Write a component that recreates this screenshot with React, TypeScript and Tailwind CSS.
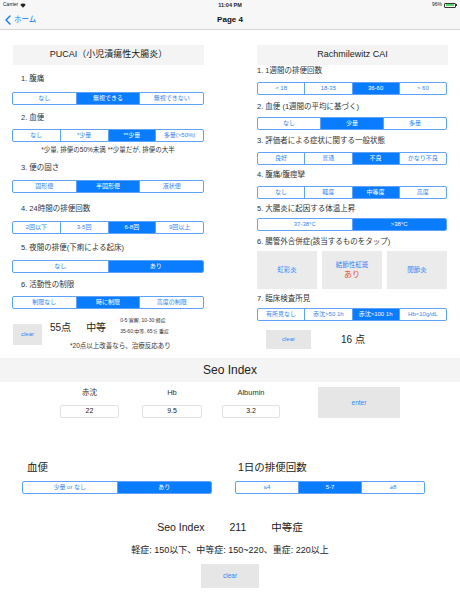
import React from "react";

const BLUE = "text-[#2f86f6]";

// iOS style segmented control
function Seg({ items, selected, className = "" }: { items: string[]; selected: number; className?: string }) {
	return (
		<div className={`flex h-[13px] border border-[#5ea3f7] rounded-[2px] overflow-hidden ${className}`}>
			{items.map((t, i) => (
				<div
					key={i}
					className={`flex-1 flex items-center justify-center text-[6px] whitespace-nowrap ${i > 0 ? "border-l border-[#5ea3f7]" : ""} ${
						i === selected ? "bg-[#0a7cff] text-white" : BLUE
					}`}
				>
					{t}
				</div>
			))}
		</div>
	);
}

function Label({ children, className = "" }: { children: React.ReactNode; className?: string }) {
	return <div className={`h-[12px] leading-[12px] text-[7.5px] text-[#333] whitespace-nowrap ${className}`}>{children}</div>;
}

function StatusBar() {
	return (
		<div className="relative h-[10px] flex items-center justify-between px-[3px] text-[5px] text-[#222]">
			<div className="flex items-center gap-[2px]">
				<span>Carrier</span>
				<svg width="6" height="5" viewBox="0 0 12 9">
					<path d="M6 9 L0.5 3 A8 8 0 0 1 11.5 3 Z" fill="#222" />
				</svg>
			</div>
			<div className="absolute left-0 right-0 text-center font-semibold text-[5.5px]">11:04 PM</div>
			<div className="flex items-center gap-[2px]">
				<span>96%</span>
				<div className="flex items-center">
					<div className="w-[12px] h-[5px] border border-[#333] rounded-[1px] p-[0.5px]">
						<div className="h-full w-[90%] bg-[#4cd964]" />
					</div>
					<div className="w-[1px] h-[2px] bg-[#333]" />
				</div>
			</div>
		</div>
	);
}

function NavBar() {
	return (
		<div className="relative h-[20px] flex items-center border-b border-[#d4d4d4]">
			<div className="flex items-center pl-[5px] gap-[3px] text-[#0a7cff]">
				<svg width="6" height="10" viewBox="0 0 6 10">
					<path d="M5 1 L1 5 L5 9" stroke="#0a7cff" strokeWidth="1.4" fill="none" strokeLinecap="round" strokeLinejoin="round" />
				</svg>
				<span className="text-[7.5px]">ホーム</span>
			</div>
			<div className="absolute left-0 right-0 text-center font-bold text-[8px] text-[#111]">Page 4</div>
		</div>
	);
}

function PucaiPanel() {
	return (
		<div className="w-[230px] pl-[12px] flex flex-col">
			<div className="mt-[15px] ml-[1px] w-[191px] h-[20px] bg-[#f4f4f4] flex items-center justify-center text-[9px] text-[#222]">
				PUCAI（小児潰瘍性大腸炎）
			</div>
			<Label className="mt-[8px] ml-[9px]">1. 腹痛</Label>
			<Seg className="mt-[7px] w-[192px]" items={["なし", "無視できる", "無視できない"]} selected={1} />
			<Label className="mt-[7px] ml-[9px]">2. 血便</Label>
			<Seg className="mt-[5px] w-[192px]" items={["なし", "*少量", "**少量", "多量(>50%)"]} selected={2} />
			<div className="mt-[3px] w-[192px] h-[10px] leading-[10px] text-center text-[6.5px] text-[#333]">
				*少量, 排便の50%未満 **少量だが, 排便の大半
			</div>
			<Label className="mt-[7px] ml-[9px]">3. 便の固さ</Label>
			<Seg className="mt-[6px] w-[192px]" items={["固形便", "半固形便", "液状便"]} selected={1} />
			<Label className="mt-[10px] ml-[9px]">4. 24時間の排便回数</Label>
			<Seg className="mt-[6px] w-[192px]" items={["2回以下", "3-5回", "6-8回", "9回以上"]} selected={2} />
			<Label className="mt-[8px] ml-[9px]">5. 夜間の排便(下痢による起床)</Label>
			<Seg className="mt-[6px] w-[192px]" items={["なし", "あり"]} selected={1} />
			<Label className="mt-[6px] ml-[9px]">6. 活動性の制限</Label>
			<Seg className="mt-[5px] w-[192px]" items={["制限なし", "時に制限", "高度の制限"]} selected={1} />
			<div className="mt-[10px] flex items-start">
				<div className={`mt-[5px] ml-[1px] w-[29px] h-[21px] bg-[#e6e6e6] flex items-center justify-center text-[6px] ${BLUE}`}>clear</div>
				<div className="ml-[8px] flex flex-col">
					<div className="flex items-start h-[18px]">
						<span className="leading-[18px] text-[10px] text-[#222]">55点</span>
						<span className="ml-[15px] leading-[18px] text-[10px] text-[#222]">中等</span>
						<div className="ml-[14px] -mt-[4px] leading-[11px] text-[5px] text-[#333]">
							<div>0-5:寛解, 10-30:軽症</div>
							<div>35-60:中等, 65≦ 重症</div>
						</div>
					</div>
					<div className="mt-[4px] ml-[20px] h-[10px] leading-[10px] text-[6.5px] text-[#333] whitespace-nowrap">
						*20点以上改善なら、治療反応あり
					</div>
				</div>
			</div>
		</div>
	);
}

function GrayBox({ children }: { children: React.ReactNode }) {
	return <div className="w-[60px] h-[38px] bg-[#ebebeb] flex flex-col items-center justify-center">{children}</div>;
}

function CaiPanel() {
	return (
		<div className="w-[230px] pl-[27px] flex flex-col">
			<div className="mt-[15px] w-[191px] h-[20px] bg-[#f4f4f4] flex items-center justify-center text-[9px] text-[#222]">
				Rachmilewitz CAI
			</div>
			<Label>1. 1週間の排便回数</Label>
			<Seg className="mt-[5px] w-[190px]" items={["< 18", "18-35", "36-60", "> 60"]} selected={2} />
			<Label className="mt-[6px]">2. 血便 (1週間の平均に基づく)</Label>
			<Seg className="mt-[4px] w-[190px]" items={["なし", "少量", "多量"]} selected={1} />
			<Label className="mt-[5px]">3. 評価者による症状に関する一般状態</Label>
			<Seg className="mt-[5px] w-[190px]" items={["良好", "普通", "不良", "かなり不良"]} selected={2} />
			<Label className="mt-[4px]">4. 腹痛/腹痙攣</Label>
			<Seg className="mt-[5px] w-[190px]" items={["なし", "軽度", "中等度", "高度"]} selected={2} />
			<Label className="mt-[4px]">5. 大腸炎に起因する体温上昇</Label>
			<Seg className="mt-[3px] w-[190px]" items={["37-38°C", ">38°C"]} selected={1} />
			<Label className="mt-[5px]">6. 腸管外合併症(該当するものをタップ)</Label>
			<div className="mt-[3px] w-[190px] flex justify-between">
				<GrayBox>
					<span className={`text-[6.5px] ${BLUE}`}>虹彩炎</span>
				</GrayBox>
				<GrayBox>
					<span className={`text-[6.5px] ${BLUE}`}>結節性紅斑</span>
					<span className="mt-[1px] text-[8px] leading-[10px] text-[#e5483c]">あり</span>
				</GrayBox>
				<GrayBox>
					<span className={`text-[6.5px] ${BLUE}`}>関節炎</span>
				</GrayBox>
			</div>
			<Label className="mt-[4px]">7. 臨床検査所見</Label>
			<Seg className="mt-[3px] w-[190px]" items={["有所見なし", "赤沈>50 1h", "赤沈>100 1h", "Hb<10g/dL"]} selected={2} />
			<div className="mt-[9px] flex items-center">
				<div className={`ml-[9px] w-[45px] h-[19px] bg-[#e6e6e6] flex items-center justify-center text-[6px] ${BLUE}`}>clear</div>
				<span className="ml-[30px] text-[10px] text-[#222]">16 点</span>
			</div>
		</div>
	);
}

function InputCol({ label, value, width, className = "" }: { label: string; value: string; width: string; className?: string }) {
	return (
		<div className={`flex flex-col items-center ${width} ${className}`}>
			<div className="h-[12px] leading-[12px] text-[7.5px] text-[#333]">{label}</div>
			<div className="mt-[6px] w-full h-[13px] border border-[#e2e2e2] rounded-[2px] flex items-center justify-center text-[7px] text-[#222]">
				{value}
			</div>
		</div>
	);
}

function SeoSection() {
	return (
		<div className="flex flex-col">
			<div className="h-[24px] bg-[#f4f4f4] flex items-center justify-center text-[12px] text-[#222]">Seo Index</div>
			<div className="mt-[5px] pl-[60px] flex items-start">
				<InputCol label="赤沈" value="22" width="w-[59px]" />
				<InputCol label="Hb" value="9.5" width="w-[60px]" className="ml-[23px]" />
				<InputCol label="Albumin" value="3.2" width="w-[58px]" className="ml-[20px]" />
				<div className={`ml-[38px] w-[82px] h-[31px] bg-[#e6e6e6] flex items-center justify-center text-[6.5px] ${BLUE}`}>enter</div>
			</div>
			<div className="mt-[43px] pl-[22px] flex">
				<div className="w-[190px] flex flex-col">
					<div className="ml-[5px] h-[12px] leading-[12px] text-[10.5px] text-[#222]">血便</div>
					<Seg className="mt-[8px] h-[12px]" items={["少量 or なし", "あり"]} selected={1} />
				</div>
				<div className="ml-[23px] w-[190px] flex flex-col">
					<div className="ml-[3px] h-[12px] leading-[12px] text-[10.5px] text-[#222]">1日の排便回数</div>
					<Seg className="mt-[8px] h-[12px]" items={["≤4", "5-7", "≥8"]} selected={1} />
				</div>
			</div>
			<div className="mt-[27px] h-[14px] flex items-center justify-center gap-[25px] text-[10.5px] text-[#222]">
				<span>Seo Index</span>
				<span>211</span>
				<span>中等症</span>
			</div>
			<div className="mt-[9px] h-[12px] leading-[12px] text-center text-[9px] text-[#222]">
				軽症: 150以下、中等症: 150~220、重症: 220以上
			</div>
			<div className={`mt-[8px] mx-auto w-[58px] h-[24px] bg-[#e6e6e6] flex items-center justify-center text-[6.5px] ${BLUE}`}>clear</div>
		</div>
	);
}

export default function App() {
	return (
		<div className="w-[460px] h-[614px] overflow-hidden bg-white font-['Liberation_Sans','Noto_Sans_CJK_JP',sans-serif]">
			<div className="bg-[#f7f7f7]">
				<StatusBar />
				<NavBar />
			</div>
			<div className="flex h-[328px]">
				<PucaiPanel />
				<CaiPanel />
			</div>
			<SeoSection />
		</div>
	);
}
